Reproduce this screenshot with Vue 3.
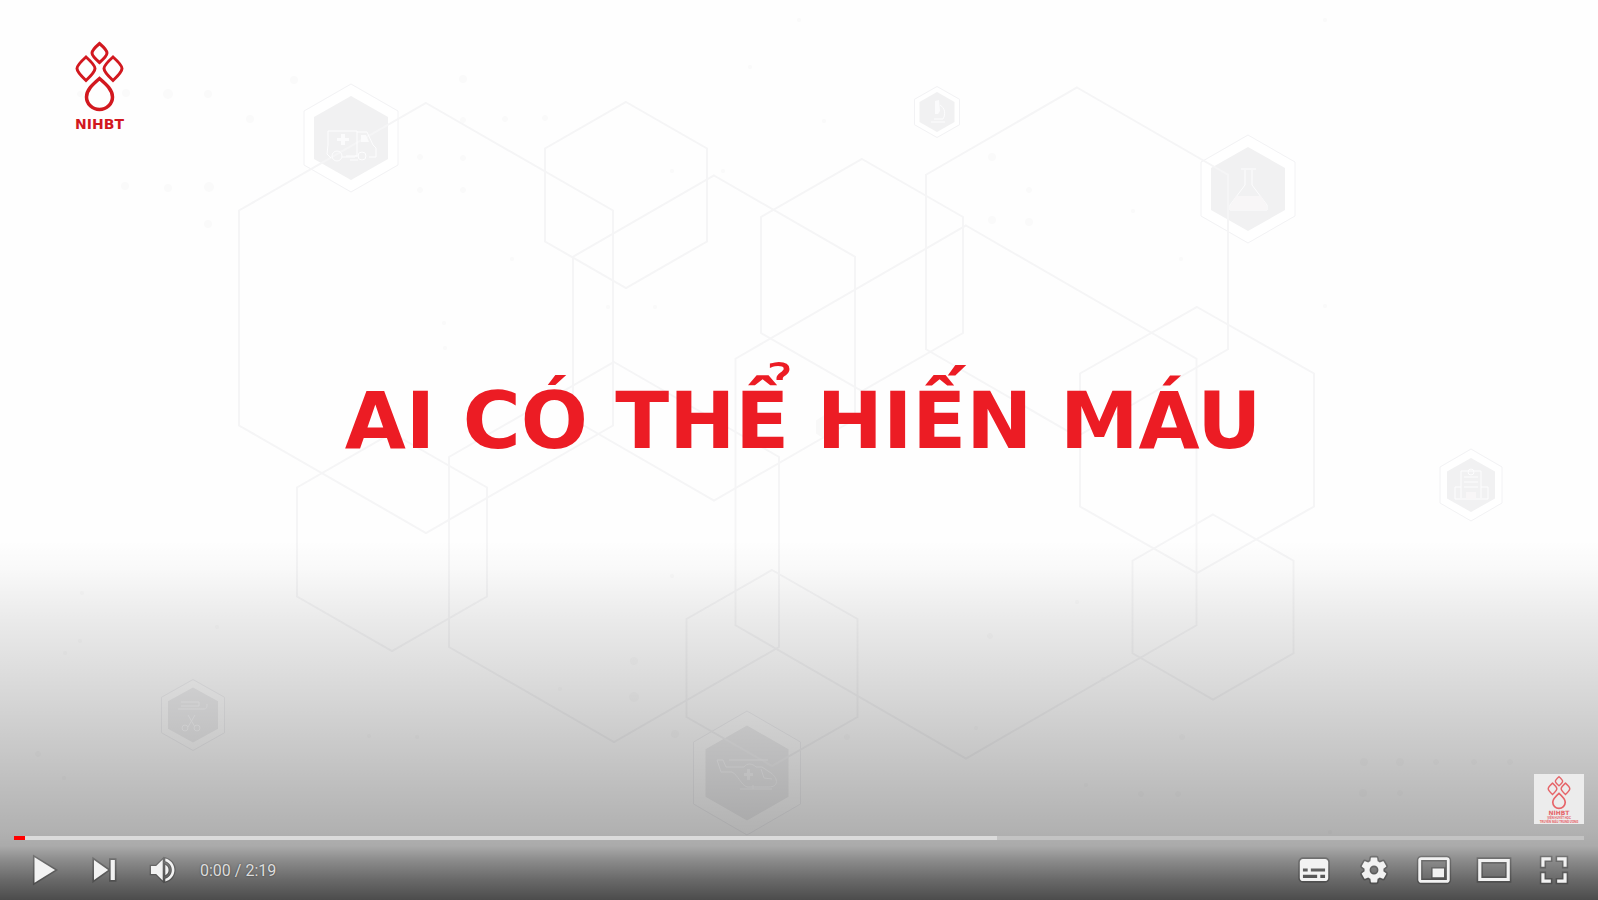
<script setup>
import { ref, computed } from 'vue'

const duration = 139
const current = ref(1)
const buffered = 62.6
const playedStop = computed(() => `${(current.value / duration) * 100}%`)

// Hexagon outline centred on cx/cy, pointing up, with shoulders at "rise" below the tip.
const hex = (cx, cy, w, h, rise = h / 4) => {
  const l = cx - w / 2
  const r = cx + w / 2
  const t = cy - h / 2
  const b = cy + h / 2
  return `${cx},${t} ${r},${t + rise} ${r},${b - rise} ${cx},${b} ${l},${b - rise} ${l},${t + rise}`
}

const outlines = [
  hex(426, 318, 374, 430),
  hex(626, 195, 162, 186),
  hex(714, 338, 282, 325),
  hex(862, 275, 202, 232),
  hex(1077, 262, 302, 349),
  hex(966, 492, 461, 533),
  hex(1197, 440, 234, 266),
  hex(1213, 607, 161, 185),
  hex(772, 668, 171, 196),
  hex(392, 542, 190, 218),
  hex(614, 552, 330, 380)
]

const badges = [
  { cx: 351, cy: 138, w: 94, h: 108, iw: 74, ih: 84 },
  { cx: 937, cy: 112, w: 45, h: 51, iw: 35, ih: 40 },
  { cx: 1248, cy: 189, w: 94, h: 108, iw: 74, ih: 84 },
  { cx: 1471, cy: 485, w: 62, h: 72, iw: 48, ih: 54 },
  { cx: 193, cy: 715, w: 63, h: 71, iw: 50, ih: 55 },
  { cx: 747, cy: 773, w: 107, h: 124, iw: 83, ih: 95 }
]

const specks = [
  [80, 94, 3], [126, 93, 4], [168, 94, 5], [208, 94, 4], [294, 80, 4], [463, 79, 4],
  [125, 186, 4], [168, 188, 4], [209, 187, 5], [208, 224, 4], [250, 119, 4], [463, 120, 3],
  [505, 119, 3], [545, 118, 3], [420, 157, 3], [463, 158, 3], [420, 190, 3], [463, 190, 3],
  [992, 157, 4], [1029, 190, 3], [992, 220, 4], [1029, 222, 4], [750, 67, 2], [799, 20, 2],
  [512, 259, 2], [608, 307, 2], [655, 307, 2], [672, 171, 2], [723, 171, 2], [444, 323, 2],
  [445, 348, 2], [1181, 259, 2], [1133, 211, 2], [1325, 20, 2], [1325, 306, 2], [824, 121, 2],
  [634, 661, 4], [634, 697, 5], [675, 734, 4], [560, 689, 2], [417, 737, 2], [369, 736, 2],
  [672, 576, 2], [217, 627, 2], [82, 593, 2], [80, 641, 2], [65, 653, 2], [38, 754, 3],
  [64, 778, 2], [976, 728, 2], [847, 737, 3], [1103, 679, 2], [1182, 737, 3], [1364, 762, 4],
  [1400, 762, 4], [1436, 762, 3], [1474, 762, 3], [1510, 762, 3], [1363, 793, 4], [1400, 793, 3],
  [1141, 794, 3], [1178, 794, 3], [1086, 785, 2], [1330, 832, 2], [1077, 602, 2], [990, 636, 3]
]
</script>

<template>
  <main class="player">
    <svg class="frame" viewBox="0 0 1598 900" preserveAspectRatio="xMidYMid slice" aria-hidden="true">
      <rect v-for="(s, i) in specks" :key="'s' + i" class="speck" :x="s[0] - s[2]" :y="s[1] - s[2]" :width="s[2] * 2" :height="s[2] * 2" :rx="s[2]" />
      <g v-for="(b, i) in badges" :key="'b' + i">
        <polygon class="badge-ring" :points="hex(b.cx, b.cy, b.w, b.h)" />
        <polygon class="badge-core" :points="hex(b.cx, b.cy, b.iw, b.ih)" />
      </g>
      <polygon class="badge-core faint" :points="hex(826, 427, 20, 26)" />
      <polygon v-for="(points, i) in outlines" :key="'o' + i" class="outline" :points="points" />

      <g class="glyph">
        <path d="M328 145V131h29v25H346M328 145l-1 9 4 4M357 132h10l6 13 3 3v9h-7M359 156h-4M342 157h13M350 160h8" />
        <circle cx="337" cy="156" r="5" />
        <circle cx="362" cy="156" r="4" />
        <path class="solid" d="M341 134h4v4h4v3h-4v4h-4v-4h-4v-3h4zM361 135h5l3 7h-8z" />
      </g>
      <g class="glyph">
        <path d="M940 105c5 3 6 9 3 14M931 122h14M934 119h9" />
        <path class="solid" d="M935 101l4-1 1 11-2 3h-3z" />
      </g>
      <g class="glyph">
        <path d="M1241 169h15M1245 170v15l-15 20v5h37v-5l-15-20v-15" />
        <path class="solid soft" d="M1236 196h25l6 10v4h-37v-4z" />
      </g>
      <g class="glyph">
        <path d="M1461 498v-27h20v27M1455 499v-12h6M1481 487h7v12h-33M1464 477h14M1464 482h14M1464 487h14" />
        <circle cx="1471" cy="472" r="3" />
        <path class="solid soft" d="M1466 492h10v7h-10z" />
      </g>
      <g class="glyph">
        <path d="M181 702h18v4h-18M178 709h26c3 0 3-2 3-5M188 715l7 12M195 715l-7 12" />
        <circle cx="185" cy="728" r="3" />
        <circle cx="197" cy="728" r="3" />
      </g>
      <g class="glyph">
        <path d="M729 760h39M717 760l4 12h11c6 3 9 13 15 15h22c9 0 10-8 2-14l-9-6h-6c-4-4-9-4-12 0h-18M717 760h6l3 7M740 789h32M753 785v4M761 769l3 9 8 1" />
        <path class="solid" d="M747 769h3v4h3v3h-3v4h-3v-4h-3v-3h3z" />
      </g>
      <defs>
        <symbol id="drops" viewBox="0 0 57 73">
          <g fill="none" stroke="currentColor" stroke-width="3">
            <path d="M28.500 3.500Q36 10 36 13Q36 16 28.500 22.500Q21 16 21 13Q21 10 28.500 3.500Z" />
            <path d="M15 17Q24 25 24 28.500Q24 32 15 40.500Q6 32 6 28.500Q6 25 15 17Z" />
            <path d="M42 17Q51 25 51 28.500Q51 32 42 40.500Q33 32 33 28.500Q33 25 42 17Z" />
            <path stroke-width="3.500" d="M28.500 38.500C36 45 41.500 50 41.500 57A13 12.500 0 0 1 15.500 57C15.500 50 21 45 28.500 38.500Z" />
          </g>
        </symbol>
      </defs>
    </svg>
    <div class="shade"></div>

    <header class="brand">
      <svg class="brand-mark" aria-hidden="true"><use href="#drops" /></svg>
      <span class="brand-name">NIHBT</span>
    </header>

    <div class="stage">
      <h1 class="title">AI CÓ THỂ HIẾN MÁU</h1>
    </div>

    <footer class="chrome">
      <a class="watermark" href="#channel" aria-label="NIHBT">
        <svg viewBox="0 0 50 50" aria-hidden="true">
          <use href="#drops" x="11" y="1" width="28" height="35" />
          <text class="wm-name" x="25" y="41" text-anchor="middle">NIHBT</text>
          <text class="wm-line" x="25" y="45" text-anchor="middle">VIỆN HUYẾT HỌC</text>
          <text class="wm-line" x="25" y="49" text-anchor="middle">TRUYỀN MÁU TRUNG ƯƠNG</text>
        </svg>
      </a>

      <input v-model.number="current" class="seek" type="range" min="0" :max="duration" aria-label="Seek"
        :style="{ '--played': playedStop, '--buffered': buffered + '%' }" />

      <div class="controls">
        <button class="btn" type="button" aria-label="Play">
          <svg viewBox="-1 -1 38 38"><path d="M12 26V10L25 18Z" /></svg>
        </button>
        <button class="btn" type="button" aria-label="Next">
          <svg viewBox="0 0 36 36"><path d="M12 24 20.500 18 12 12V24ZM22 12V24H24.500V12Z" /></svg>
        </button>
        <button class="btn" type="button" aria-label="Mute">
          <svg viewBox="-5 -5 46 46"><path d="M8 21H12L17 26V10L12 15H8ZM19 14V22C20.480 21.320 21.500 19.770 21.500 18C21.500 16.260 20.480 14.740 19 14ZM19 11.290C21.890 12.150 24 14.830 24 18C24 21.170 21.890 23.850 19 24.710V26.770C23.010 25.860 26 22.280 26 18C26 13.720 23.010 10.140 19 9.230Z" /></svg>
        </button>
        <span class="time">0:00 / 2:19</span>
        <span class="spacer"></span>
        <button class="btn" type="button" aria-label="Subtitles">
          <svg viewBox="-1 -1 38 38"><path fill-rule="evenodd" d="M11 11C9.890 11 9 11.900 9 13V23C9 24.100 9.890 25 11 25H25C26.100 25 27 24.100 27 23V13C27 11.900 26.100 11 25 11ZM11 17H14V19H11ZM20 23H11V21H20ZM25 23H22V21H25ZM25 19H16V17H25Z" /></svg>
        </button>
        <button class="btn" type="button" aria-label="Settings">
          <svg viewBox="-1 -1 38 38"><path fill-rule="evenodd" d="m23.940 18.780c.030-.250.050-.510.050-.780 0-.270-.020-.520-.050-.780l1.680-1.320c.150-.120.190-.330.090-.510l-1.600-2.760c-.090-.170-.310-.240-.480-.170l-1.990.800c-.410-.320-.860-.580-1.350-.780l-.300-2.120c-.020-.190-.190-.330-.390-.330h-3.200c-.200 0-.360.140-.390.330l-.300 2.120c-.480.200-.930.470-1.350.780l-1.990-.800c-.180-.070-.390 0-.480.170l-1.600 2.760c-.100.170-.050.390.090.510l1.680 1.320c-.030.250-.050.520-.050.780 0 .260.020.520.050.780l-1.680 1.320c-.150.120-.190.330-.090.510l1.600 2.760c.090.170.310.240.480.170l1.990-.800c.410.320.860.580 1.350.780l.300 2.120c.020.190.190.330.390.330h3.200c.200 0 .360-.140.390-.330l.300-2.120c.480-.200.930-.470 1.350-.780l1.990.800c.180.070.390 0 .480-.170l1.600-2.760c.090-.170.050-.390-.090-.510ZM18 20.800a2.800 2.800 0 1 1 0-5.600a2.800 2.800 0 0 1 0 5.600Z" /></svg>
        </button>
        <button class="btn" type="button" aria-label="Miniplayer">
          <svg viewBox="-3 -3 42 42"><path fill-rule="evenodd" d="M25 17H17V23H25ZM29 25V11C29 9.900 28.100 9 27 9H9C7.900 9 7 9.900 7 11V25C7 26.100 7.900 27 9 27H27C28.100 27 29 26.100 29 25ZM27 25H9V11H27Z" /></svg>
        </button>
        <button class="btn" type="button" aria-label="Theater mode">
          <svg viewBox="-1 -1 38 38"><path fill-rule="evenodd" d="M28 11V25H8V11ZM10 13H26V23H10Z" /></svg>
        </button>
        <button class="btn" type="button" aria-label="Full screen">
          <svg viewBox="-1 -1 38 38"><path d="M10 16H12V12H16V10H10ZM20 10V12H24V16H26V10ZM24 24H20V26H26V20H24ZM12 20H10V26H16V24H12Z" /></svg>
        </button>
      </div>
    </footer>
  </main>
</template>

<style scoped>
.player {
  position: relative;
  display: grid;
  grid-template-rows: auto 1fr auto;
  min-height: 100vh;
  overflow: hidden;
  background: #fefefe;
  font-family: Roboto, "Liberation Sans", sans-serif;
}

.frame,
.shade {
  position: absolute;
  inset: 0;
  width: 100%;
  height: 100%;
}

.shade {
  top: auto;
  height: 360px;
  background: linear-gradient(
    rgba(0, 0, 0, 0) 0,
    rgba(0, 0, 0, 0.02) 28px,
    rgba(0, 0, 0, 0.08) 80px,
    rgba(0, 0, 0, 0.15) 150px,
    rgba(0, 0, 0, 0.225) 220px,
    rgba(0, 0, 0, 0.3) 290px,
    rgba(0, 0, 0, 0.33) 306px,
    rgba(0, 0, 0, 0.45) 320px,
    rgba(0, 0, 0, 0.59) 340px,
    rgba(0, 0, 0, 0.7) 360px
  );
}

.speck { fill: #fafafa; }
.outline { fill: none; stroke: #f5f5f6; stroke-width: 2; }
.badge-ring { fill: #fff; fill-opacity: 0.5; stroke: #f2f2f4; stroke-width: 1; }
.badge-core { fill: #f1f1f2; }
.faint { fill: #f8f8f8; }
.glyph { fill: none; stroke: #fdfdfe; stroke-width: 1; stroke-linejoin: round; }
.glyph .solid { fill: #fbfbfc; stroke: none; }
.glyph .soft { fill: #f8f6f7; }

.brand,
.stage,
.chrome {
  position: relative;
}

.brand {
  display: flex;
  flex-direction: column;
  align-items: center;
  justify-self: start;
  padding: 40px 0 0 71px;
  color: #d2181f;
}

.brand-mark {
  width: 57px;
  height: 73px;
}

.brand-name {
  margin-top: 4px;
  font: bold 14px/14px "DejaVu Sans", sans-serif;
}

.stage {
  display: grid;
  place-items: center;
  padding: 0 0 64px 8px;
}

.title {
  margin: 0;
  color: #ec1c24;
  font: bold 79px/96px "DejaVu Sans", sans-serif;
  white-space: nowrap;
}

.chrome {
  display: flex;
  flex-direction: column;
  padding: 0 14px;
}

.watermark {
  align-self: flex-end;
  width: 50px;
  height: 50px;
  margin-bottom: 12px;
  background: #ececec;
  color: #e66468;
}

.watermark svg {
  display: block;
  width: 100%;
  height: 100%;
  fill: currentColor;
}

.wm-name { font: bold 6px "DejaVu Sans", sans-serif; }
.wm-line { font: bold 3px Roboto, sans-serif; }

.seek {
  appearance: none;
  width: 100%;
  height: 4px;
  margin: 0;
  background: linear-gradient(
    to right,
    #f00 var(--played),
    #dbdbdb var(--played),
    #dbdbdb var(--buffered),
    #c3c3c3 var(--buffered)
  );
  cursor: pointer;
}

.seek::-webkit-slider-thumb {
  appearance: none;
  width: 0;
  height: 0;
}

.controls {
  display: flex;
  align-items: center;
  height: 60px;
}

.btn {
  width: 60px;
  height: 60px;
  padding: 0;
  border: 0;
  background: none;
  cursor: pointer;
}

.btn svg {
  display: block;
  width: 60px;
  height: 60px;
  fill: #f2f2f2;
  stroke: rgba(0, 0, 0, 0.22);
  stroke-width: 2px;
  paint-order: stroke;
}

.time {
  padding-left: 6px;
  color: #ddd;
  font-size: 16px;
  text-shadow: 0 0 2px rgba(0, 0, 0, 0.5);
}

.spacer { flex: 1; }
</style>

<style>
body {
  margin: 0;
}
</style>
